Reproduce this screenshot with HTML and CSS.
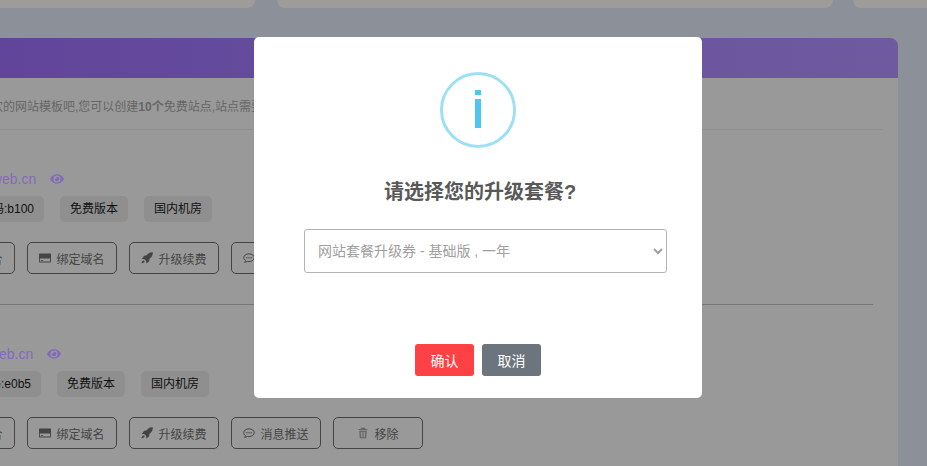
FILE: index.html
```html
<!DOCTYPE html>
<html lang="zh-CN">
<head>
    <meta charset="UTF-8">
    <title>我的网站</title>
    <link rel="stylesheet" href="styles.css">
</head>
<body>
    <div class="page">
        <div class="top-row">
            <div class="top-card top-card-a"></div>
            <div class="top-card top-card-b"></div>
            <div class="top-card top-card-c"></div>
        </div>

        <div class="panel">
            <div class="panel-head"></div>
            <div class="panel-body">
                <p class="intro">请选择您喜欢的网站模板吧,您可以创建<b>10个</b>免费站点,站点需要定期续费才能继续使用哦</p>

                <div class="site">
                    <div class="site-info site-info-wide">
                        <div class="domain">www.123web.cn
                            <svg class="eye" viewBox="0 0 576 512"><path d="M572.5 241.4C518.3 135.6 410.9 64 288 64S57.7 135.6 3.5 241.4a32.4 32.4 0 0 0 0 29.2C57.7 376.4 165.1 448 288 448s230.3-71.6 284.5-177.4a32.4 32.4 0 0 0 0-29.2zM288 400a144 144 0 1 1 144-144 143.9 143.9 0 0 1-144 144zm0-240a95.3 95.3 0 0 0-25.3 3.8 47.9 47.9 0 0 1-66.9 66.9A95.8 95.8 0 1 0 288 160z"/></svg>
                        </div>
                        <div class="badges">
                            <span class="badge">网站识别码:b100</span>
                            <span class="badge">免费版本</span>
                            <span class="badge">国内机房</span>
                        </div>
                    </div>
                    <div class="actions">
                        <a class="btn"><svg class="icon" viewBox="0 0 16 16"><circle cx="8" cy="8" r="6"/></svg>网站整合</a>
                        <a class="btn"><svg class="icon" viewBox="0 0 16 16"><path d="M1 2h14a1 1 0 0 1 1 1v10a1 1 0 0 1-1 1H1a1 1 0 0 1-1-1V3a1 1 0 0 1 1-1zm.2 6.500v4.300h13.600V8.500zm1.300 2.500h3v1h-3z" fill-rule="evenodd"/></svg>绑定域名</a>
                        <a class="btn"><svg class="icon" viewBox="0 0 16 16"><path d="M15.700.3c.2 3.600-1 6.500-4.300 8.800l-.5 3.300-3.500 2.900-.6-3.300-2.300-2.400-3.400-.5L4.300 5l3.300-.6C9.800 1.200 12.300-.1 15.700.3zM3.600 11.300l1.300 1.300c-.8 1.300-2.200 2-4.300 2.300.3-2 1.200-3.100 3-3.600z"/></svg>升级续费</a>
                        <a class="btn"><svg class="icon" viewBox="0 0 16 16"><path d="M8 2.400c3.900 0 7 2.300 7 5.200s-3.100 5.200-7 5.200c-.8 0-1.500-.1-2.200-.3-1 .8-2.300 1.200-3.800 1.200.7-.7 1.200-1.500 1.300-2.300C1.900 10.500 1 9.100 1 7.600c0-2.900 3.100-5.200 7-5.200z" fill="none" stroke="currentColor" stroke-width="1.300"/><circle cx="5.200" cy="7.600" r=".9"/><circle cx="8" cy="7.600" r=".9"/><circle cx="10.800" cy="7.600" r=".9"/></svg>消息推送</a>
                    </div>
                </div>

                <div class="site site-last">
                    <div class="site-info">
                        <div class="domain">www.456web.cn
                            <svg class="eye" viewBox="0 0 576 512"><path d="M572.5 241.4C518.3 135.6 410.9 64 288 64S57.7 135.6 3.5 241.4a32.4 32.4 0 0 0 0 29.2C57.7 376.4 165.1 448 288 448s230.3-71.6 284.5-177.4a32.4 32.4 0 0 0 0-29.2zM288 400a144 144 0 1 1 144-144 143.9 143.9 0 0 1-144 144zm0-240a95.3 95.3 0 0 0-25.3 3.8 47.9 47.9 0 0 1-66.9 66.9A95.8 95.8 0 1 0 288 160z"/></svg>
                        </div>
                        <div class="badges">
                            <span class="badge">网站识别码:e0b5</span>
                            <span class="badge">免费版本</span>
                            <span class="badge">国内机房</span>
                        </div>
                    </div>
                    <div class="actions">
                        <a class="btn"><svg class="icon" viewBox="0 0 16 16"><circle cx="8" cy="8" r="6"/></svg>网站整合</a>
                        <a class="btn"><svg class="icon" viewBox="0 0 16 16"><path d="M1 2h14a1 1 0 0 1 1 1v10a1 1 0 0 1-1 1H1a1 1 0 0 1-1-1V3a1 1 0 0 1 1-1zm.2 6.500v4.300h13.600V8.500zm1.300 2.500h3v1h-3z" fill-rule="evenodd"/></svg>绑定域名</a>
                        <a class="btn"><svg class="icon" viewBox="0 0 16 16"><path d="M15.700.3c.2 3.600-1 6.500-4.300 8.800l-.5 3.300-3.500 2.900-.6-3.300-2.300-2.400-3.400-.5L4.300 5l3.300-.6C9.800 1.200 12.300-.1 15.700.3zM3.600 11.300l1.300 1.300c-.8 1.300-2.200 2-4.300 2.300.3-2 1.200-3.100 3-3.600z"/></svg>升级续费</a>
                        <a class="btn"><svg class="icon" viewBox="0 0 16 16"><path d="M8 2.400c3.900 0 7 2.300 7 5.200s-3.100 5.200-7 5.200c-.8 0-1.500-.1-2.200-.3-1 .8-2.300 1.200-3.800 1.200.7-.7 1.200-1.500 1.300-2.300C1.900 10.500 1 9.100 1 7.600c0-2.900 3.100-5.200 7-5.200z" fill="none" stroke="currentColor" stroke-width="1.300"/><circle cx="5.200" cy="7.600" r=".9"/><circle cx="8" cy="7.600" r=".9"/><circle cx="10.800" cy="7.600" r=".9"/></svg>消息推送</a>
                        <a class="btn"><svg class="icon icon-light" viewBox="0 0 16 16"><path d="M5.500 1h5l.7 1.500h2.800v1.500h-12V2.500h2.800zM3 5h10l-.7 10H3.700zM5 6.500l.3 7h1.200v-7zm2.400 0v7h1.200v-7zm2.100 0v7h1.200l.3-7z" fill-rule="evenodd"/></svg>移除</a>
                    </div>
                </div>
            </div>
        </div>
    </div>

    <div class="modal">
        <div class="modal-icon"><span class="modal-icon-i"></span></div>
        <h2 class="modal-title">请选择您的升级套餐?</h2>
        <select class="modal-select">
            <option>网站套餐升级券 - 基础版 , 一年</option>
        </select>
        <div class="modal-actions">
            <button class="modal-btn modal-btn-ok">确认</button>
            <button class="modal-btn modal-btn-cancel">取消</button>
        </div>
    </div>
</body>
</html>
```

FILE: styles.css
```css
* {
    box-sizing: border-box;
}
html, body {
    height: 100%;
}
body {
    margin: 0;
    overflow: hidden;
    background: #8c9199;
    font-family: "Liberation Sans", "Noto Sans CJK SC", sans-serif;
    font-size: 12px;
    color: #444;
}
.page {
    width: 1300px;
    margin-left: -201px;
}
.top-row {
    display: flex;
    height: 8px;
}
.top-card {
    flex: none;
    background: #9d9c99;
    border-radius: 0 0 8px 8px;
}
.top-card-a {
    width: 456px;
}
.top-card-b {
    width: 556px;
    margin-left: 22px;
}
.top-card-c {
    width: 200px;
    margin-left: 20px;
}
.panel {
    width: 1099px;
    margin-top: 30px;
    border-radius: 8px 8px 0 0;
    background: #999;
    overflow: hidden;
}
.panel-head {
    height: 40px;
    background: linear-gradient(90deg, #5d4099, #6f5a9f);
}
.panel-body {
    padding: 0 15px 0 126px;
}
.intro {
    margin: 0;
    padding: 21px 0 0 6px;
    height: 52px;
    line-height: 16px;
    font-size: 12px;
    color: #666;
    white-space: nowrap;
    overflow: hidden;
    border-bottom: 1px solid #8f8f8f;
}
.site {
    padding-top: 38px;
    padding-bottom: 30px;
    margin-right: 10px;
    border-bottom: 1px solid #777;
}
.site-last {
    border-bottom: 0;
}
.site-info {
    padding-left: 6px;
}
.site-info-wide {
    padding-left: 9px;
}
.domain {
    display: flex;
    align-items: center;
    height: 22px;
    padding-left: 1px;
    font-size: 14px;
    color: #8469bd;
    white-space: nowrap;
}
.eye {
    width: 14px;
    height: 14px;
    margin-left: 14px;
    fill: #8469bd;
}
.badges {
    display: flex;
    gap: 16px;
    margin-top: 6px;
}
.badge {
    height: 26px;
    line-height: 26px;
    padding: 0 10px;
    border-radius: 5px;
    background: #8f8f8f;
    color: #111;
    white-space: nowrap;
}
.actions {
    display: flex;
    gap: 12px;
    margin-top: 20px;
}
.btn {
    display: flex;
    align-items: center;
    justify-content: center;
    width: 90px;
    height: 32px;
    border: 1px solid #444;
    border-radius: 5px;
    color: #444;
    white-space: nowrap;
}
.icon {
    width: 12px;
    height: 12px;
    margin-right: 5px;
    fill: currentColor;
}
.icon-light {
    fill: #666;
}
.modal {
    position: absolute;
    left: 254px;
    top: 37px;
    width: 448px;
    height: 361px;
    padding: 35px 35px 0 50px;
    background: #fff;
    border-radius: 5px;
}
.modal-icon {
    display: flex;
    justify-content: center;
    align-items: center;
    width: 76px;
    height: 76px;
    margin: 0 auto;
    position: relative;
    left: -7.500px;
    border: 3px solid #9de0f6;
    border-radius: 50%;
}
.modal-icon-i {
    display: block;
    width: 6px;
    height: 38px;
    margin-top: -2px;
    background: linear-gradient(#4fc6ee 5px, transparent 5px, transparent 9px, #4fc6ee 9px);
}
.modal-title {
    margin: 31px 0 0;
    position: relative;
    left: -5.500px;
    text-align: center;
    font-size: 20px;
    line-height: 26px;
    font-weight: bold;
    color: #595959;
}
.modal-select {
    display: block;
    width: 363px;
    height: 44px;
    margin-top: 24px;
    padding: 0 9px;
    border: 1px solid #b4b4b4;
    border-radius: 3px;
    background: #fff;
    font-family: inherit;
    font-size: 14px;
    color: #a0a0a0;
}
.modal-actions {
    display: flex;
    justify-content: center;
    gap: 8px;
    margin-top: 71px;
    margin-left: -15px;
}
.modal-btn {
    width: 59px;
    height: 32px;
    border: 0;
    border-radius: 3px;
    font-family: inherit;
    font-size: 14px;
    color: #fff;
}
.modal-btn-ok {
    background: #ff4146;
}
.modal-btn-cancel {
    background: #6c757d;
}
```
